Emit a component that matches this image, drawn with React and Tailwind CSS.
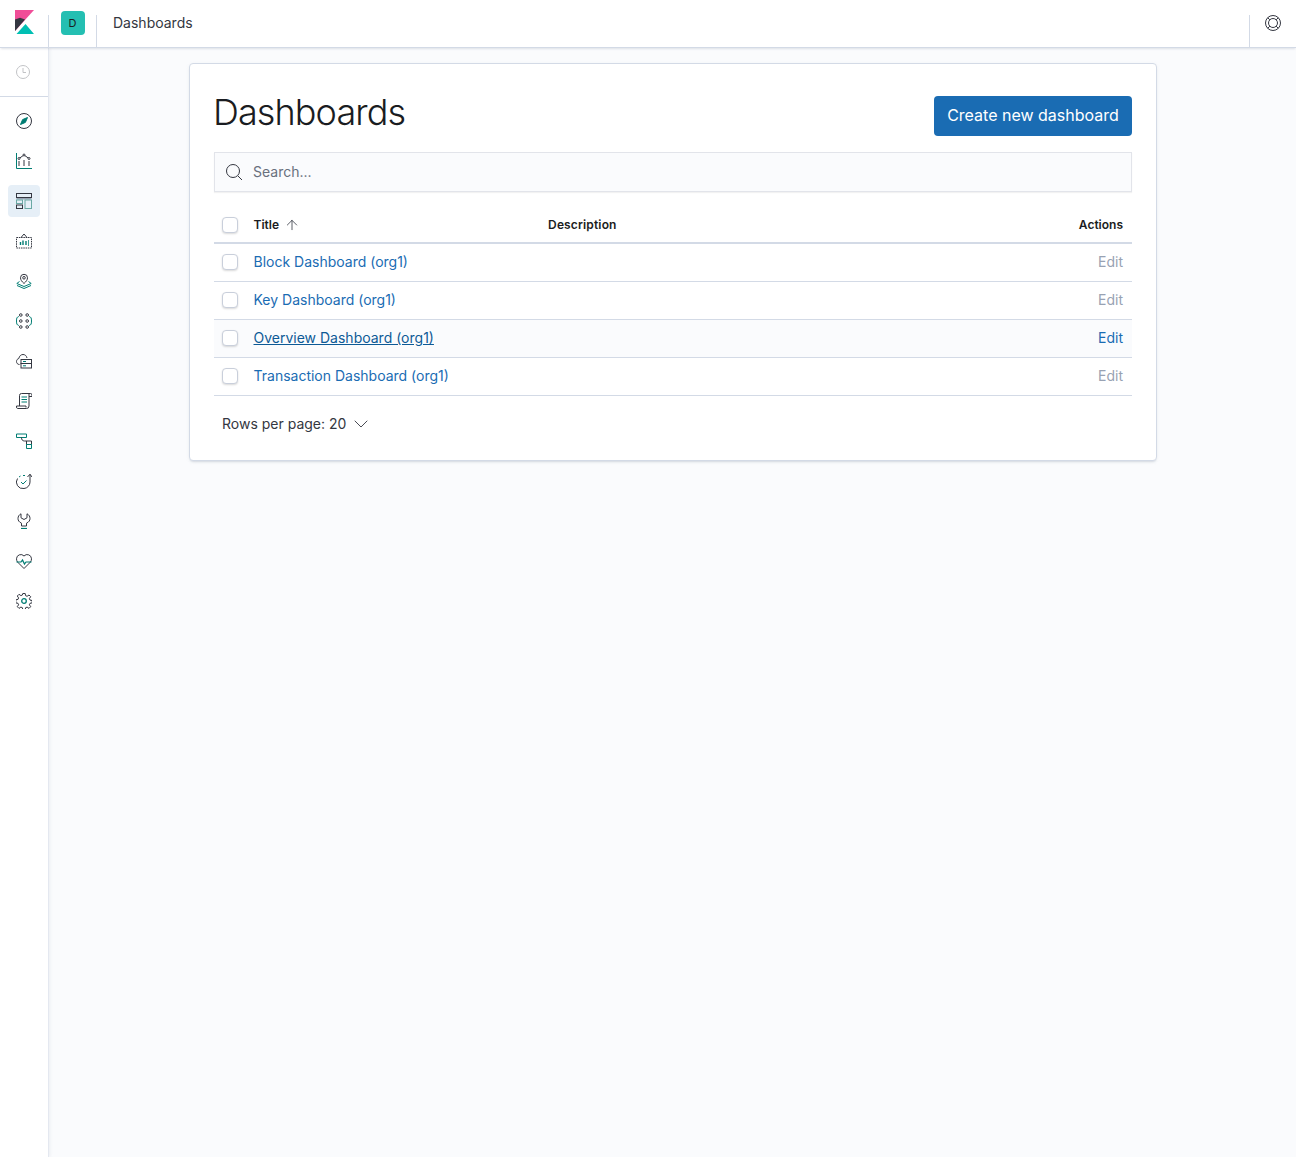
import React from "react";
import { ArrowUp, ChevronDown } from "lucide-react";

const dark = "#343741";
const teal = "#017d73";

const Icon = ({ children }) => (
  <svg width="16" height="16" viewBox="0 0 16 16" fill="none" stroke={dark} strokeWidth="1">
    {children}
  </svg>
);

const navIcons = [
  // discover
  <Icon key="discover">
    <circle cx="8" cy="8" r="7.5" />
    <path d="M11.5 4.5 9.4 9.4 4.5 11.5 6.6 6.6z" fill={teal} stroke={teal} />
  </Icon>,
  // visualize
  <Icon key="visualize">
    <path d="M.5 0v15.500h15.500" stroke={teal} />
    <path d="M3 13V8M8 13V7M13 13V8" />
    <path d="M3 5.500 8 2l5 3.500" />
    <circle cx="3" cy="5.500" r="1" fill="#fff" />
    <circle cx="8" cy="2" r="1" fill="#fff" />
    <circle cx="13" cy="5.500" r="1" fill="#fff" />
  </Icon>,
  // dashboard
  <Icon key="dashboard">
    <rect x=".5" y=".5" width="15" height="4" />
    <rect x=".5" y="5" width="15" height="1.500" fill="#98a2b3" stroke="none" />
    <rect x=".5" y="7" width="6" height="3.500" stroke="#6aa9a4" />
    <rect x=".5" y="12" width="6" height="3.500" />
    <rect x="9" y="7" width="6.500" height="8.500" stroke="#6aa9a4" />
  </Icon>,
  // canvas
  <Icon key="canvas">
    <path d="M.5 4.500h15v10.500H.5z" strokeDasharray="1.500 .8" />
    <path d="M5 4.500 8 1l3 3.500" />
    <path d="M4.500 12V9M7 12V7.500M10 12V8M12 8h1M12 10h1M12 12h1" stroke={teal} strokeWidth="1.400" />
  </Icon>,
  // maps
  <Icon key="maps">
    <path d="M8 10.500C5.800 8.500 4.500 6.800 4.500 4.800a3.500 3.500 0 0 1 7 0c0 2-1.300 3.700-3.500 5.700z" />
    <circle cx="8" cy="4.800" r="1.300" />
    <path d="M3.500 8.500.8 10.500 8 13.500l7.200-3-2.700-2M1 12.500 8 15.500l7-3" stroke={teal} />
  </Icon>,
  // ml
  <Icon key="ml">
    <circle cx="4.800" cy="2" r="1.300" />
    <circle cx="11.200" cy="2" r="1.300" />
    <circle cx="4.800" cy="8" r="1.300" />
    <circle cx="11.200" cy="8" r="1.300" />
    <circle cx="4.800" cy="14" r="1.300" />
    <circle cx="11.200" cy="14" r="1.300" />
    <path d="M2.800 3.500C1 4 .5 5 .5 8s.5 4 2.300 4.500M13.200 3.500c1.800.5 2.300 1.500 2.300 4.500s-.5 4-2.300 4.500" stroke={teal} />
  </Icon>,
  // infrastructure
  <Icon key="infra">
    <path d="M3.500 11.500C1.500 11.500.5 10 .5 8.500c0-1.500 1-2.700 2.300-3C3.300 3 5 1.500 7 1.500c2 0 3.500 1.300 4 3.500" />
    <rect x="5" y="6.500" width="10.500" height="4" />
    <rect x="5" y="10.500" width="10.500" height="4.500" />
    <path d="M7 8.500h3M7 12.800h3" stroke={teal} />
  </Icon>,
  // logs
  <Icon key="logs">
    <path d="M3.500 13V2.500a2 2 0 0 1 2-2h9a1.500 1.500 0 0 1 1.500 1.500v1.500h-3" />
    <path d="M13 .8V13a2.500 2.500 0 0 1-2.500 2.500h-9A1.500 1.500 0 0 1 .5 14v-1H10v1.500" />
    <path d="M5.500 4h5.500M5.500 6.500h5.500M5.500 9h5.500" stroke={teal} strokeWidth="1.200" />
  </Icon>,
  // apm
  <Icon key="apm">
    <path d="M.5 1h10v3.500H.5z" stroke={teal} />
    <path d="M5.500 4.500c0 2 .8 3.500 3 3.500h7v3.500h-5V8" />
    <path d="M10.500 11.500h5v4h-5z" stroke={teal} />
  </Icon>,
  // uptime
  <Icon key="uptime">
    <path d="M1.500 5.500A6.500 6.500 0 0 0 8 15.500a6.500 6.500 0 0 0 6-6.500V1.500" />
    <path d="m11.500 4 2.500-2.800L16 4" />
    <path d="M4.500 3 3 4M9 2.500H7" stroke={teal} />
    <path d="m5 9 2 2 3.500-3.500" stroke={teal} />
  </Icon>,
  // dev tools
  <Icon key="dev">
    <path d="M5 .8C3 1.800 2 3.500 2 5.500c0 2 1 3.500 3.500 4.700V13h5v-2.800C13 9 14 7.500 14 5.500c0-2-1-3.700-3-4.700v4L8 6.500 5 4.800z" />
    <path d="M5 15.500h6" stroke={teal} strokeWidth="1.200" />
  </Icon>,
  // stack monitoring
  <Icon key="monitoring">
    <path d="M1.500 9C.8 8 .5 7 .5 5.800A4.300 4.300 0 0 1 8 3a4.300 4.300 0 0 1 7.500 2.800c0 1.200-.3 2.200-1 3.200L8 15.500z" />
    <path d="M.5 9H5l1.500-2L8.500 11l1.500-2h5.500" stroke={teal} strokeWidth="1.200" />
  </Icon>,
  // management
  <Icon key="management">
    <path d="M6.800.5h2.400l.4 2.200 1.500.6 1.900-1.300 1.700 1.700-1.300 1.900.6 1.500 2.200.4v2.400l-2.200.4-.6 1.500 1.300 1.900-1.700 1.700-1.900-1.300-1.500.6-.4 2.200H6.800l-.4-2.200-1.500-.6-1.900 1.300-1.700-1.700 1.300-1.900-.6-1.500-2.200-.4V6.800l2.200-.4.6-1.500-1.300-1.900 1.700-1.700 1.900 1.300 1.500-.6z" />
    <circle cx="8" cy="8" r="2.300" stroke={teal} strokeWidth="1.300" />
  </Icon>,
];

const rows = [
  { title: "Block Dashboard (org1)" },
  { title: "Key Dashboard (org1)" },
  { title: "Overview Dashboard (org1)", hover: true },
  { title: "Transaction Dashboard (org1)" },
];

const Checkbox = () => (
  <span className="block w-4 h-4 rounded-[4px] bg-white border border-[#c9cfdb] shadow-[0_1px_2px_rgba(0,0,0,0.15)]" />
);

const App = () => {
  return (
    <div className="h-[1157px] overflow-hidden flex flex-col bg-[#fafbfd] text-[14px] text-[#343741] font-['Inter',sans-serif]">
      <header className="h-12 shrink-0 flex bg-white border-b border-[#d3dae6] shadow-[0_2px_2px_-1px_rgba(152,162,179,0.3)] z-10">
        <div className="w-[48px] flex justify-center pt-[10px] pl-[1px]">
          <svg width="19" height="24" viewBox="0 0 19 24">
            <path d="M0 0h19L0 21z" fill="#f04e98" />
            <path d="M0 9.500v11.500L10 9.500 5 7.700z" fill="#343741" />
            <path d="M1.500 24 10.500 14 19 24z" fill="#00bfb3" />
          </svg>
        </div>
        <div className="w-[49px] mt-[15px] border-l border-r border-[#d3dae6] flex justify-center -mb-px">
          <span className="w-6 h-6 -mt-1 rounded-[4px] bg-[#24bfb2] text-[#1a1c21] text-[11px] flex items-center justify-center">
            D
          </span>
        </div>
        <span className="ml-4 mt-[14px] leading-[18px] h-[18px] text-[14px]">Dashboards</span>
        <div className="ml-auto w-[47px] mt-[15px] border-l border-[#d3dae6] flex justify-center">
          <svg width="16" height="16" viewBox="0 0 16 16" fill="none" stroke={dark}>
            <circle cx="8" cy="8" r="7.500" />
            <circle cx="8" cy="8" r="4.500" />
            <path d="m2.700 2.700 2.200 2.200M13.300 2.700l-2.200 2.200M2.700 13.300l2.200-2.200M13.300 13.300l-2.200-2.200" />
          </svg>
        </div>
      </header>

      <div className="flex flex-1 min-h-0">
        <nav className="w-[49px] shrink-0 bg-white border-r border-[#e4e8f0] shadow-[1px_0_3px_rgba(152,162,179,0.15)]">
          <div className="h-[49px] pb-px border-b border-[#d3dae6] flex items-center justify-center pr-[2px]">
            <svg width="14" height="14" viewBox="0 0 14 14" fill="none" stroke="#c2c3c6">
              <circle cx="7" cy="7" r="6.500" />
              <path d="M7 3v4.500h3" />
            </svg>
          </div>
          <div className="pt-1 flex flex-col items-center">
            {navIcons.map((icon, i) => (
              <div
                key={i}
                className={`w-8 h-8 my-1 rounded-[4px] flex items-center justify-center ${i === 2 ? "bg-[#e6eff7]" : ""}`}
              >
                {icon}
              </div>
            ))}
          </div>
        </nav>

        <main className="flex-1 min-w-0 pt-[15px] pl-[140px]">
          <section className="w-[968px] h-[398px] bg-white border border-[#d3dae6] rounded-[4px] shadow-[0_2px_2px_-1px_rgba(152,162,179,0.3),0_1px_5px_-2px_rgba(152,162,179,0.3)] px-6 pt-[32px]">
            <div className="flex justify-between items-start">
              <h1 className="text-[36px] leading-[32px] -ml-px font-light tracking-[-0.9px] text-[#1a1c21]">Dashboards</h1>
              <button className="h-10 w-[198px] pb-[2px] rounded-[4px] bg-[#1a6cb3] text-white text-[16px]">
                Create new dashboard
              </button>
            </div>

            <div className="mt-4 h-10 flex items-center bg-[#fafbfd] border border-[#e2e4ea] shadow-[0_1px_1px_rgba(0,0,0,0.05)]">
              <svg className="ml-[10.500px] mr-[10.500px]" width="17" height="17" viewBox="0 0 17 17" fill="none" stroke={dark}>
                <circle cx="7" cy="7" r="6.500" />
                <path d="m12 12 4 4" />
              </svg>
              <span className="pb-[2px] text-[#69707d]">Search...</span>
            </div>

            <div className="mt-[14px] h-[38px] pt-[2px] flex items-center pl-2 pr-[9px] border-b-2 border-[#d3dae6]">
              <Checkbox />
              <span className="ml-[15.500px] text-[12px] font-semibold text-[#1a1c21]">Title</span>
              <ArrowUp className="ml-[5px]" size={16} strokeWidth={1.200} color={dark} />
              <span className="ml-[248px] text-[12px] font-semibold tracking-[0.15px] text-[#1a1c21]">Description</span>
              <span className="ml-auto text-[12px] font-semibold text-[#1a1c21]">Actions</span>
            </div>

            {rows.map((row) => (
              <div
                key={row.title}
                className={`h-[38px] pb-[2px] flex items-center pl-2 pr-[9px] border-b border-[#d3dae6] ${row.hover ? "bg-[#fafbfd]" : ""}`}
              >
                <Checkbox />
                <a className={`ml-[15.500px] ${row.hover ? "text-[#0d5a96] underline" : "text-[#1a6cb3]"}`}>
                  {row.title}
                </a>
                <span className={`ml-auto ${row.hover ? "text-[#1a6cb3]" : "text-[#98a2b3]"}`}>Edit</span>
              </div>
            ))}

            <div className="mt-[16px] ml-2 flex items-center h-6">
              <span className="pb-[2px]">Rows per page: 20</span>
              <ChevronDown className="ml-[3px]" size={24} strokeWidth={0.9} color={dark} />
            </div>
          </section>
        </main>
      </div>
    </div>
  );
};

export default App;
